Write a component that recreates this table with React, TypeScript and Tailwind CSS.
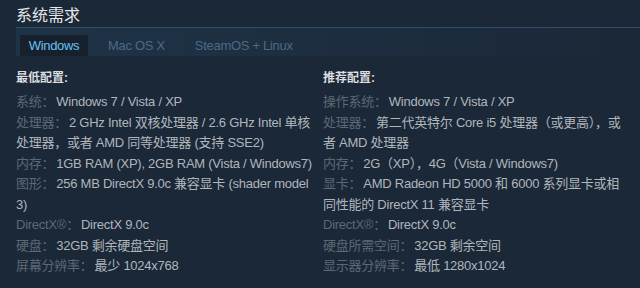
import React from 'react';

const font = { fontFamily: '"Liberation Sans", Arial, "Noto Sans CJK SC", sans-serif' };

const minimum = [
  { label: '系统：', value: 'Windows 7 / Vista / XP' },
  { label: '处理器：', value: '2 GHz Intel 双核处理器 / 2.6 GHz Intel 单核处理器，或者 AMD 同等处理器 (支持 SSE2)' },
  { label: '内存：', value: '1GB RAM (XP), 2GB RAM (Vista / Windows7)' },
  { label: '图形：', value: '256 MB DirectX 9.0c 兼容显卡 (shader model 3)' },
  { label: 'DirectX®：', value: 'DirectX 9.0c' },
  { label: '硬盘：', value: '32GB 剩余硬盘空间' },
  { label: '屏幕分辨率：', value: '最少 1024x768' },
];

const recommended = [
  { label: '操作系统：', value: 'Windows 7 / Vista / XP' },
  { label: '处理器：', value: '第二代英特尔 Core i5 处理器（或更高），或者 AMD 处理器' },
  { label: '内存：', value: '2G（XP），4G（Vista / Windows7)' },
  { label: '显卡：', value: 'AMD Radeon HD 5000 和 6000 系列显卡或相同性能的 DirectX 11 兼容显卡' },
  { label: 'DirectX®：', value: 'DirectX 9.0c' },
  { label: '硬盘所需空间：', value: '32GB 剩余空间' },
  { label: '显示器分辨率：', value: '最低 1280x1024' },
];

const Column = ({ title, rows }: { title: string; rows: { label: string; value: string }[] }) => (
  <div className="w-[299px]">
    <div className="text-[12px] font-bold text-[#dcdedf] leading-[20px] mb-[4px]">{title}</div>
    <ul className="text-[13px] leading-[20.5px] tracking-[-0.25px]">
      {rows.map((r) => (
        <li key={r.label}>
          <span className="text-[#5b6875]">{r.label}</span>
          <span className="text-[#b0b6bc] ml-[2px]">{r.value}</span>
        </li>
      ))}
    </ul>
  </div>
);

export default function App() {
  return (
    <div className="w-[640px] h-[288px] bg-[#1b2838] overflow-hidden pl-[16px]" style={font}>
      <h2 className="text-[16px] text-[#e5e8ea] leading-[20px] pt-[6px] pb-[1px]">系统需求</h2>
      <div className="h-[29px] border-t border-[#2b4f68] bg-gradient-to-r from-[#1f3347] to-[#1b2838] pt-[7px] pl-[4px] flex items-end text-[13px] tracking-[-0.3px]">
        <div className="h-[21px] w-[68px] bg-[#16212d] text-[#67c1f5] flex items-center justify-center">Windows</div>
        <div className="h-[21px] ml-[20px] text-[#4b6a85] flex items-center">Mac OS X</div>
        <div className="h-[21px] ml-[30px] text-[#4b6a85] flex items-center">SteamOS + Linux</div>
      </div>
      <div className="flex gap-[8px] pt-[12px]">
        <Column title="最低配置:" rows={minimum} />
        <Column title="推荐配置:" rows={recommended} />
      </div>
    </div>
  );
}
